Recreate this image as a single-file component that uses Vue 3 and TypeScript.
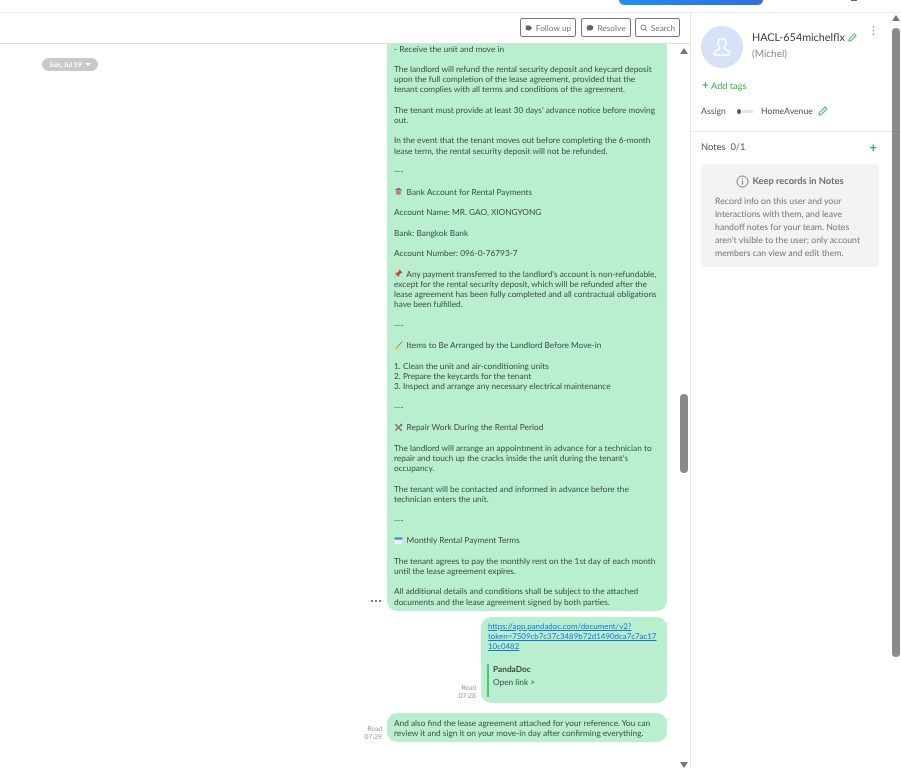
<script setup lang="ts">
interface Line { text: string; icon?: string }
const longMessage: Line[] = [
  { text: '- Receive the unit and move in' },
  { text: '' },
  { text: 'The landlord will refund the rental security deposit and keycard deposit' },
  { text: 'upon the full completion of the lease agreement, provided that the' },
  { text: 'tenant complies with all terms and conditions of the agreement.' },
  { text: '' },
  { text: "The tenant must provide at least 30 days' advance notice before moving" },
  { text: 'out.' },
  { text: '' },
  { text: 'In the event that the tenant moves out before completing the 6-month' },
  { text: 'lease term, the rental security deposit will not be refunded.' },
  { text: '' },
  { text: '---' },
  { text: '' },
  { text: 'Bank Account for Rental Payments', icon: 'bank' },
  { text: '' },
  { text: 'Account Name: MR. GAO, XIONGYONG' },
  { text: '' },
  { text: 'Bank: Bangkok Bank' },
  { text: '' },
  { text: 'Account Number: 096-0-76793-7' },
  { text: '' },
  { text: "Any payment transferred to the landlord's account is non-refundable,", icon: 'pin' },
  { text: 'except for the rental security deposit, which will be refunded after the' },
  { text: 'lease agreement has been fully completed and all contractual obligations' },
  { text: 'have been fulfilled.' },
  { text: '' },
  { text: '---' },
  { text: '' },
  { text: 'Items to Be Arranged by the Landlord Before Move-in', icon: 'broom' },
  { text: '' },
  { text: '1. Clean the unit and air-conditioning units' },
  { text: '2. Prepare the keycards for the tenant' },
  { text: '3. Inspect and arrange any necessary electrical maintenance' },
  { text: '' },
  { text: '---' },
  { text: '' },
  { text: 'Repair Work During the Rental Period', icon: 'tools' },
  { text: '' },
  { text: 'The landlord will arrange an appointment in advance for a technician to' },
  { text: "repair and touch up the cracks inside the unit during the tenant's" },
  { text: 'occupancy.' },
  { text: '' },
  { text: 'The tenant will be contacted and informed in advance before the' },
  { text: 'technician enters the unit.' },
  { text: '' },
  { text: '---' },
  { text: '' },
  { text: 'Monthly Rental Payment Terms', icon: 'calendar' },
  { text: '' },
  { text: 'The tenant agrees to pay the monthly rent on the 1st day of each month' },
  { text: 'until the lease agreement expires.' },
  { text: '' },
  { text: 'All additional details and conditions shall be subject to the attached' },
  { text: 'documents and the lease agreement signed by both parties.' },
]
const noteLines = [
  'Record info on this user and your',
  'interactions with them, and leave',
  'handoff notes for your team. Notes',
  "aren't visible to the user; only account",
  'members can view and edit them.',
]
</script>

<template>
  <div class="page">
    <div class="top-strip">
      <div class="cta"></div>
      <div class="top-icon"></div>
    </div>
    <div class="body">
      <main class="main">
        <div class="toolbar">
          <button class="tool tool-follow">
            <svg width="8" height="8" viewBox="0 0 10 10"><path d="M1 2h5l3 3-2.600 3.200L1 7.500z" fill="#666"/></svg>
            Follow up
          </button>
          <button class="tool tool-resolve">
            <svg width="8" height="8" viewBox="0 0 10 10"><path d="M5 1.200c2.400 0 4.200 1.400 4.200 3.400S7.400 8 5 8c-.6 0-1 0-1.500-.2L1.400 9l.5-2C1.200 6.400.8 5.500.8 4.600.8 2.600 2.600 1.200 5 1.200z" fill="#666"/></svg>
            Resolve
          </button>
          <button class="tool tool-search">
            <svg width="8" height="8" viewBox="0 0 10 10" fill="none" stroke="#666"><circle cx="4.200" cy="4.200" r="3"/><path d="M6.500 6.500 9 9"/></svg>
            Search
          </button>
        </div>
        <div class="chat">
          <div class="date-pill">Sun, Jul 19 <span class="caret"></span></div>

          <div class="row">
            <span class="dots"><i></i><i></i><i></i></span>
            <div class="bubble long">
              <div v-for="(line, i) in longMessage" :key="i" class="line">
                <svg v-if="line.icon === 'bank'" class="emoji" viewBox="0 0 10 10"><path d="M5 .5 8.500 3v1h-7V3z" fill="#6e6a78"/><rect x="2" y="4" width="6" height="4.500" fill="#a59fb0"/><rect x="4" y="5" width="2" height="3.500" fill="#d65a5a"/></svg>
                <svg v-else-if="line.icon === 'pin'" class="emoji" viewBox="0 0 10 10"><path d="M6 .6 9.400 4 8.600 4.800 7.800 4.400 5.800 6.400 5.800 8 5 8.600 1.400 5 2 4.200 3.600 4.200 5.600 2.200 5.200 1.400z" fill="#e0393e"/><path d="M3 7 .6 9.400" stroke="#8a8a8a" stroke-width=".8"/></svg>
                <svg v-else-if="line.icon === 'broom'" class="emoji" viewBox="0 0 10 10"><path d="M9 .5 4.500 6" stroke="#9a6a3a" stroke-width="1"/><path d="M3.600 4.800 5.500 6.400C4.800 8.200 3 9.400 1 9.500 2 8.500 2.600 6.500 3.600 4.800z" fill="#e9b64a"/></svg>
                <svg v-else-if="line.icon === 'tools'" class="emoji" viewBox="0 0 10 10"><path d="M1.500 1.500 8.500 8.500" stroke="#c0504d" stroke-width="1.500"/><path d="M8.500 1.500 1.500 8.500" stroke="#6f7a80" stroke-width="1.500"/><path d="M6.500 1 9 .8 9.200 3.300 7.800 3.500z" fill="#6f7a80"/></svg>
                <svg v-else-if="line.icon === 'calendar'" class="emoji" viewBox="0 0 10 10"><rect x=".8" y="1.500" width="8.400" height="7.500" fill="#e8eef5"/><rect x=".8" y="1.500" width="8.400" height="2.500" fill="#3f87d6"/></svg>
                {{ line.text }}
              </div>
            </div>
          </div>

          <div class="row">
            <div class="meta meta-link">Read<br />07:28</div>
            <div class="bubble link-bubble">
              <a class="link">https://app.pandadoc.com/document/v2?<br />token=7509cb7c37c3489b72d1490dca7c7ac17<br />10c0482</a>
              <div class="quote">
                <div class="quote-title">PandaDoc</div>
                <div class="quote-sub">Open link &gt;</div>
              </div>
            </div>
          </div>

          <div class="row row-last">
            <div class="meta">Read<br />07:29</div>
            <div class="bubble last">
              <div class="line">And also find the lease agreement attached for your reference. You can</div>
              <div class="line">review it and sign it on your move-in day after confirming everything.</div>
            </div>
          </div>

          <div class="scrollbar chat-scroll">
            <span class="arrow up"></span>
            <span class="thumb"></span>
            <span class="arrow down"></span>
          </div>
        </div>
      </main>

      <aside class="side">
        <div class="profile">
          <div class="avatar">
            <svg width="22" height="22" viewBox="0 0 22 22" fill="none" stroke="#fff" stroke-width="1.500"><path d="M11 2.500c-2.600 0-4 1.900-4 4.300 0 1.800.7 3.300 1.700 4.300v1.700L3.500 15.500V19h15v-3.500l-5.200-2.700v-1.700c1-1 1.700-2.500 1.700-4.300 0-2.400-1.400-4.300-4-4.300z"/></svg>
          </div>
          <div class="identity">
            <div class="name">HACL-654michelflx
              <svg class="pencil" width="9" height="9" viewBox="0 0 10 10" fill="none" stroke="#5cc06a" stroke-width="1.200"><path d="M1 9l.5-2.500L7 1l2 2-5.500 5.500z"/></svg>
            </div>
            <div class="alias">(Michel)</div>
          </div>
          <span class="kebab">⋮</span>
        </div>
        <div class="add-tags"><span class="plus">+</span> Add tags</div>
        <div class="assign">
          <span class="assign-label">Assign</span>
          <span class="logo"><i class="logo-dot"></i><i class="logo-bar"></i></span>
          <span class="assignee">HomeAvenue</span>
          <svg class="pencil" width="10" height="10" viewBox="0 0 10 10" fill="none" stroke="#5cc06a" stroke-width="1.100"><path d="M1 9l.5-2.500L7 1l2 2-5.500 5.500z"/></svg>
        </div>
        <div class="notes">
          <div class="notes-head">
            <span>Notes&nbsp; 0/1</span>
            <span class="notes-plus">+</span>
          </div>
          <div class="notes-box">
            <div class="notes-title">
              <svg width="13" height="13" viewBox="0 0 13 13" fill="none" stroke="#777"><circle cx="6.500" cy="6.500" r="5.500"/><path d="M6.500 5.500v4M6.500 3.300v1"/></svg>
              Keep records in Notes
            </div>
            <div v-for="n in noteLines" :key="n" class="notes-line">{{ n }}</div>
          </div>
        </div>
        <div class="scrollbar side-scroll">
          <span class="arrow up"></span>
          <span class="thumb"></span>
        </div>
      </aside>
    </div>
  </div>
</template>

<style>
html, body { margin: 0; background: #fff; }
</style>

<style scoped>
.page {
  width: 901px;
  height: 768px;
  overflow: hidden;
  display: flex;
  flex-direction: column;
  font-family: Lato, "Open Sans", sans-serif;
  text-rendering: geometricPrecision;
  background: #fff;
  filter: blur(0.4px);
}
.top-strip {
  height: 12px;
  flex: none;
  border-bottom: 1px solid #eeeeee;
  display: flex;
  align-items: flex-start;
}
.cta {
  margin-left: 619px;
  width: 144px;
  height: 5px;
  border-radius: 0 0 10px 10px;
  background: linear-gradient(90deg, #1e90f0, #2f6fe0);
}
.top-icon {
  margin-left: 88px;
  width: 6px;
  height: 1px;
  background: #666;
}
.body { flex: 1; display: flex; min-height: 0; }
.main {
  width: 690px;
  flex: none;
  border-right: 1px solid #e6e6e6;
  display: flex;
  flex-direction: column;
  min-height: 0;
}
.toolbar {
  height: 31px;
  flex: none;
  box-sizing: border-box;
  border-bottom: 1px solid #dddddd;
  display: flex;
  justify-content: flex-end;
  align-items: flex-start;
  gap: 5px;
  padding: 5px 10px 0 0;
}
.tool {
  height: 19px;
  box-sizing: border-box;
  border: 1px solid #777;
  border-radius: 2px;
  background: #fff;
  color: #777;
  font: 8.300px Lato, sans-serif;
  display: flex;
  align-items: center;
  justify-content: center;
  gap: 3px;
  padding: 0;
}
.tool-follow { width: 56px; }
.tool-resolve { width: 50px; }
.tool-search { width: 45px; margin-left: -1px; }
.chat {
  position: relative;
  flex: 1;
  min-height: 0;
  overflow: hidden;
  display: flex;
  flex-direction: column;
  align-items: flex-end;
  padding-right: 23px;
}
.date-pill {
  position: absolute;
  left: 42px;
  top: 14px;
  width: 56px;
  height: 13px;
  box-sizing: border-box;
  border-radius: 7px;
  background: #c9c9c9;
  color: #fff;
  font-size: 6.800px;
  font-weight: 700;
  display: flex;
  align-items: center;
  justify-content: center;
  gap: 3px;
}
.caret {
  width: 0;
  height: 0;
  border: 3px solid transparent;
  border-top-color: #fff;
  border-bottom: 0;
}
.row { display: flex; align-items: flex-end; }
.row + .row { margin-top: 6px; }
.row-last { margin-top: 10px !important; }
.dots {
  display: flex;
  gap: 2px;
  margin: 0 6px 9px 0;
}
.dots i { width: 2px; height: 2px; border-radius: 50%; background: #555; }
.bubble {
  position: relative;
  background: #b9eecf;
  border-radius: 10px;
  box-sizing: border-box;
  color: #3d4f46;
  font-size: 8.300px;
  line-height: 10.260px;
}
.bubble::after {
  content: "";
  position: absolute;
  right: -3px;
  top: 6px;
  width: 0;
  height: 0;
  border-left: 3px solid #b9eecf;
  border-bottom: 2px solid transparent;
}
.long {
  width: 280px;
  padding: 0 7px 4px;
  border-radius: 0 0 10px 10px;
}
.long::after { display: none; }
.line { height: 10.260px; white-space: nowrap; }
.long .line:first-child { height: 9.260px; line-height: 10px; }
.emoji {
  width: 9px;
  height: 9px;
  vertical-align: -1.500px;
  margin-right: 1.500px;
}
.meta {
  color: #999;
  font-size: 6.800px;
  line-height: 8.500px;
  text-align: right;
  margin: 0 5px 0 0;
}
.meta-link { margin-bottom: 2px; }
.link-bubble {
  width: 186px;
  height: 86px;
  padding: 4px 7px 0;
}
.link {
  color: #1976d2;
  font-size: 7.900px;
  text-decoration: underline;
  white-space: nowrap;
}
.quote {
  margin: 12px 0 0 -1px;
  border-left: 2px solid #4cc477;
  height: 33px;
  padding-left: 4px;
}
.quote-title { font-weight: 700; line-height: 11px; }
.quote-sub { line-height: 13px; margin-top: 1px; }
.last {
  width: 280px;
  height: 29px;
  padding: 5px 7px 0;
}
.scrollbar {
  position: absolute;
  display: flex;
  flex-direction: column;
  align-items: center;
}
.arrow { width: 0; height: 0; border: 4px solid transparent; }
.arrow.up { border-top: 0; border-bottom: 6px solid #777; }
.arrow.down { border-bottom: 0; border-top: 6px solid #777; }
.thumb { background: #8a8a8a; border-radius: 4px; width: 8px; }
.chat-scroll { top: 0; right: 2px; width: 8px; height: 724px; }
.chat-scroll .up { position: absolute; top: 4px; }
.chat-scroll .thumb { position: absolute; top: 350px; height: 79px; }
.chat-scroll .down { position: absolute; bottom: 0; }
.side {
  position: relative;
  flex: 1;
  min-width: 0;
  padding: 13px 22px 0 10px;
  box-sizing: border-box;
  color: #444;
}
.profile { display: flex; align-items: flex-start; position: relative; }
.avatar {
  width: 42px;
  height: 42px;
  border-radius: 50%;
  background: #d6e2f8;
  flex: none;
  display: flex;
  align-items: center;
  justify-content: center;
}
.identity { margin-left: 9px; padding-top: 4px; }
.name { font-size: 10.800px; line-height: 15px; color: #3a3a3a; white-space: nowrap; }
.alias { font-size: 10px; line-height: 12px; color: #888; margin-top: 3px; }
.pencil { vertical-align: -1px; }
.kebab {
  position: absolute;
  right: 0;
  top: -2px;
  color: #777;
  font-size: 11px;
  line-height: 14px;
}
.add-tags {
  margin-top: 11px;
  margin-left: 1px;
  font-size: 9.200px;
  line-height: 14px;
  color: #3cb04c;
}
.plus { font-size: 12px; line-height: 10px; }
.assign {
  margin-top: 12px;
  display: flex;
  align-items: center;
  font-size: 8.700px;
  line-height: 12px;
  color: #555;
}
.assign-label { width: 36px; }
.logo { width: 24px; display: flex; align-items: center; gap: 1px; }
.logo-dot { width: 4px; height: 5px; border-radius: 50%; background: #555; }
.logo-bar { width: 11px; height: 3px; background: #e4e4e4; }
.assignee { margin-right: 5px; }
.notes {
  margin: 14px -22px 0 -10px;
  border-top: 1px solid #e6e6e6;
  padding: 8px 22px 0 10px;
}
.notes-head {
  display: flex;
  justify-content: space-between;
  font-size: 9.400px;
  line-height: 15px;
  color: #555;
}
.notes-plus { color: #3cb04c; font-size: 13px; line-height: 15px; margin-right: 2px; font-weight: 700; }
.notes-box {
  margin-top: 9px;
  background: #f3f3f3;
  border-radius: 3px;
  height: 103px;
  box-sizing: border-box;
  padding: 10px 0 0 14px;
  color: #777;
  font-size: 8.750px;
}
.notes-title {
  font-size: 9.300px;
  font-weight: 700;
  line-height: 14px;
  display: flex;
  align-items: center;
  justify-content: center;
  gap: 3px;
  margin: 0 0 6px -14px;
  color: #707070;
}
.notes-line { line-height: 13px; white-space: nowrap; }
.side-scroll { top: 0; right: 1px; width: 8px; height: 644px; }
.side-scroll .up { position: absolute; top: 2px; }
.side-scroll .thumb { position: absolute; top: 15px; height: 629px; }
</style>
